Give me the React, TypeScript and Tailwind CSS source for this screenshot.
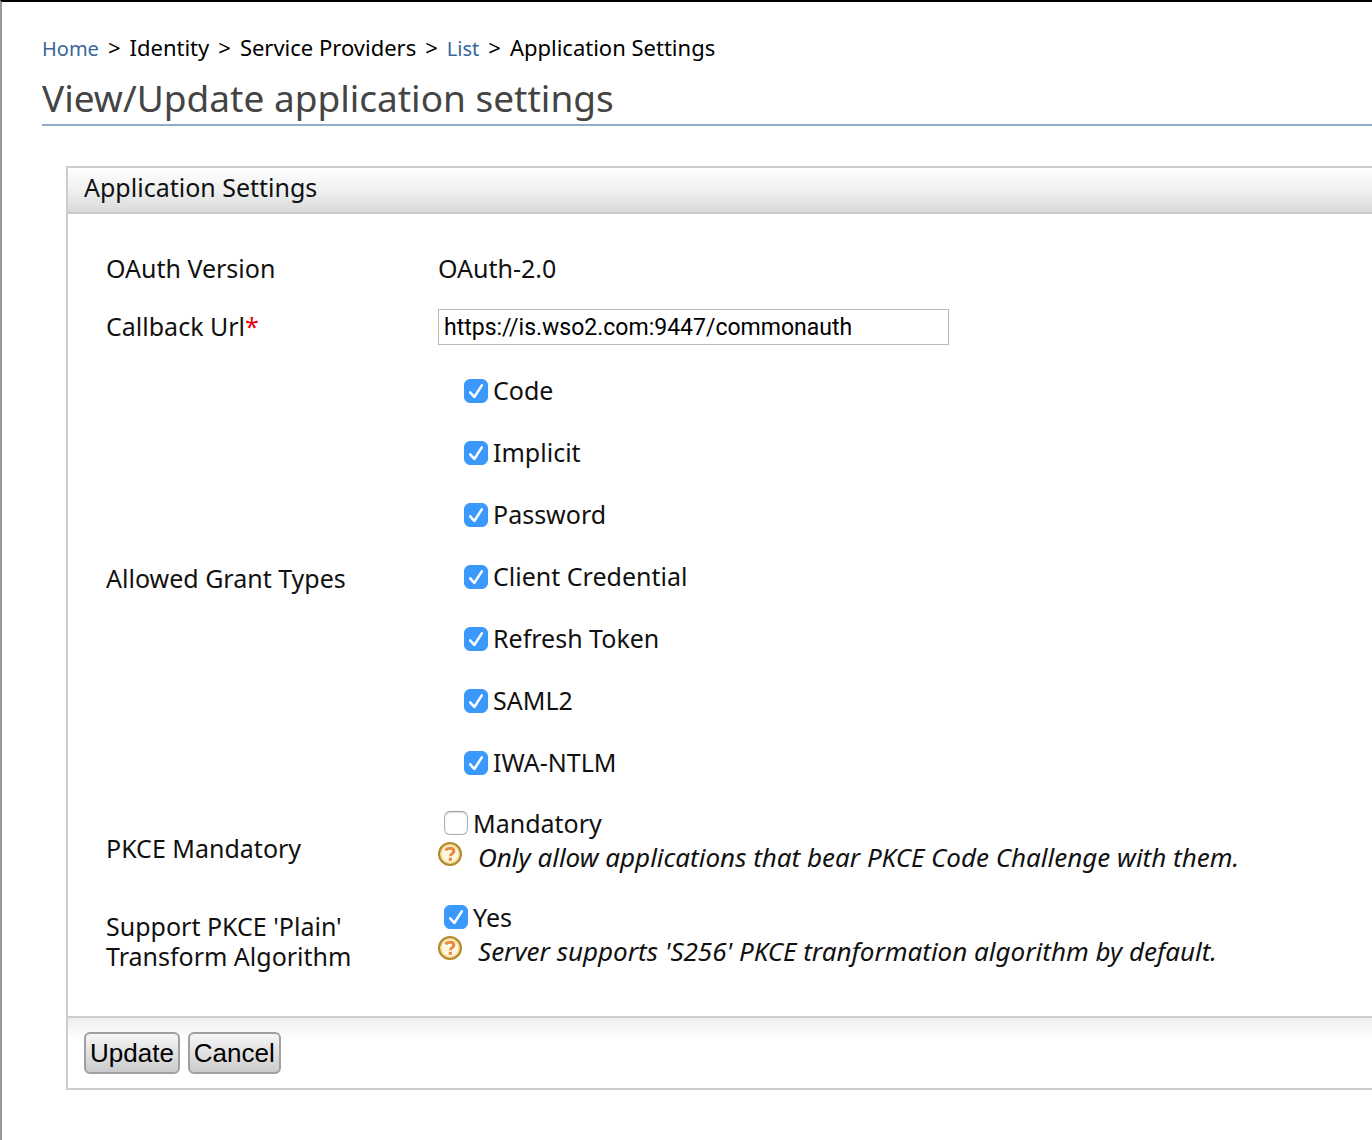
import React from "react";

const grantTypes = [
  "Code",
  "Implicit",
  "Password",
  "Client Credential",
  "Refresh Token",
  "SAML2",
  "IWA-NTLM",
];

function Checkbox({ label, defaultChecked = false }: { label: string; defaultChecked?: boolean }) {
  return (
    <label className="flex w-fit items-center gap-[5px]">
      <span className="grid size-6 shrink-0">
        <input
          type="checkbox"
          defaultChecked={defaultChecked}
          className="peer col-start-1 row-start-1 size-6 appearance-none rounded-md border border-[#b0b0b0] border-t-[#999] bg-white shadow-[inset_0_1px_2px_rgba(0,0,0,0.15)] checked:border-[#3b99fc] checked:bg-[#3b99fc] checked:shadow-none"
        />
        <svg
          viewBox="0 0 24 24"
          aria-hidden="true"
          className="pointer-events-none invisible col-start-1 row-start-1 size-6 peer-checked:visible"
        >
          <path
            d="M6.2 13.4 10.3 18 17.8 6.4"
            fill="none"
            stroke="white"
            strokeWidth="2.5"
            strokeLinecap="round"
            strokeLinejoin="round"
          />
        </svg>
      </span>
      <span>{label}</span>
    </label>
  );
}

function HelpIcon() {
  return (
    <svg viewBox="0 0 24 24" aria-hidden="true" className="-mt-1.5 size-6 shrink-0">
      <circle cx="12" cy="12" r="10.8" fill="#fdf6e0" stroke="#b3892a" strokeWidth="2.4" />
      <circle cx="12" cy="12" r="9.2" fill="none" stroke="#f0d68a" strokeWidth="1.4" />
      <path
        d="M7.8 8.4C8.6 6.8 10 6.2 12.1 6.2c2.3 0 3.8 1 3.8 2.9 0 2.4-3.5 2.6-3.5 5.2"
        fill="none"
        stroke="#ea8a3e"
        strokeWidth="3"
      />
      <rect x="10.8" y="15.8" width="3.2" height="3" fill="#ea8a3e" />
    </svg>
  );
}

function Hint({ children }: { children: React.ReactNode }) {
  return (
    <div className="flex items-center gap-4">
      <HelpIcon />
      <em className="text-[26px] leading-[34px] whitespace-nowrap">{children}</em>
    </div>
  );
}

const row = "grid grid-cols-[332px_1fr] items-center";
const button =
  "h-[42px] rounded-md border-2 border-[#a0a0a0] bg-linear-to-b from-[#f6f6f6] to-[#cbcbcb] px-1 font-['Liberation_Sans',Arial,sans-serif] text-[26px] leading-8";

export default function App() {
  return (
    <div className="min-h-screen border-t-2 border-l-2 border-t-black border-l-[#999] bg-white pt-[31px] pl-10 font-['Noto_Sans',sans-serif] text-[25px] text-[#111]">
      <nav aria-label="Breadcrumb" className="flex items-baseline gap-[9px] text-[22px] leading-7 text-black">
        <a href="#" className="text-xl leading-7 text-[#386698]">Home</a>
        <span>&gt;</span>
        <span>Identity</span>
        <span>&gt;</span>
        <span>Service Providers</span>
        <span>&gt;</span>
        <a href="#" className="text-xl leading-7 text-[#386698]">List</a>
        <span>&gt;</span>
        <span>Application Settings</span>
      </nav>
      <h1 className="mt-[11px] border-b-2 border-[#94a9cc] pb-0.5 text-[37px] leading-[48px] text-[#444]">
        View/Update application settings
      </h1>

      <form className="mt-10 ml-6 border-2 border-r-0 border-[#ccc]" onSubmit={(e) => e.preventDefault()}>
        <h2 className="h-[46px] border-b-2 border-[#c9cacc] bg-linear-to-b from-white via-[#eff0f0] to-[#d8dadc] pl-4 leading-[38px]">
          Application Settings
        </h2>
        <div className="pt-[26px] pb-[30px] pl-[38px]">
          <div className={`${row} h-[58px]`}>
            <span>OAuth Version</span>
            <span>OAuth-2.0</span>
          </div>
          <div className={`${row} h-[58px]`}>
            <label htmlFor="callback">
              Callback Url<span className="text-red-600">*</span>
            </label>
            <input
              id="callback"
              type="text"
              defaultValue="https://is.wso2.com:9447/commonauth"
              className="h-9 w-[511px] max-w-full border border-[#bbb] bg-white px-[5px] font-[Roboto,sans-serif] text-[23px] text-black"
            />
          </div>
          <fieldset className={`${row} py-1`}>
            <span className="pt-1">Allowed Grant Types</span>
            <div className="pl-[26px]">
              {grantTypes.map((name) => (
                <div key={name} className="flex h-[62px] items-center">
                  <Checkbox label={name} defaultChecked />
                </div>
              ))}
            </div>
          </fieldset>
          <div className={row}>
            <span className="pt-2">PKCE Mandatory</span>
            <div className="pt-2 pb-[18px]">
              <div className="pl-1.5 leading-[34px]">
                <Checkbox label="Mandatory" />
              </div>
              <Hint>Only allow applications that bear PKCE Code Challenge with them.</Hint>
            </div>
          </div>
          <div className={row}>
            <span className="max-w-72 pt-1 leading-[30px]">Support PKCE 'Plain' Transform Algorithm</span>
            <div className="pt-2 pb-[18px]">
              <div className="pl-1.5 leading-[34px]">
                <Checkbox label="Yes" defaultChecked />
              </div>
              <Hint>Server supports 'S256' PKCE tranformation algorithm by default.</Hint>
            </div>
          </div>
        </div>
        <div className="flex gap-2 border-t-2 border-[#ccc] bg-linear-to-b from-[#eee] to-white to-30% py-3.5 pl-4 text-black">
          <button type="submit" className={button}>Update</button>
          <button type="button" className={button}>Cancel</button>
        </div>
      </form>
    </div>
  );
}
